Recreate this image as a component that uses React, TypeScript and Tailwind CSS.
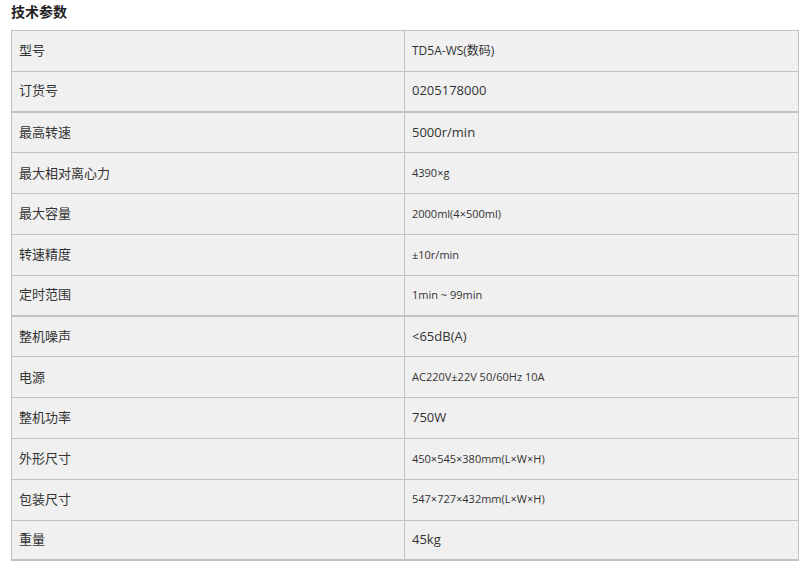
const rows: { label: string; value: string; size: 'sm' | 'md' | 'lg'; thick?: boolean }[] = [
  { label: '型号', value: 'TD5A-WS(数码)', size: 'md' },
  { label: '订货号', value: '0205178000', size: 'lg', thick: true },
  { label: '最高转速', value: '5000r/min', size: 'lg' },
  { label: '最大相对离心力', value: '4390×g', size: 'sm' },
  { label: '最大容量', value: '2000ml(4×500ml)', size: 'sm' },
  { label: '转速精度', value: '±10r/min', size: 'sm' },
  { label: '定时范围', value: '1min ~ 99min', size: 'sm', thick: true },
  { label: '整机噪声', value: '<65dB(A)', size: 'lg' },
  { label: '电源', value: 'AC220V±22V 50/60Hz 10A', size: 'sm' },
  { label: '整机功率', value: '750W', size: 'lg' },
  { label: '外形尺寸', value: '450×545×380mm(L×W×H)', size: 'sm' },
  { label: '包装尺寸', value: '547×727×432mm(L×W×H)', size: 'sm' },
  { label: '重量', value: '45kg', size: 'lg', thick: true },
];

const sizeClass = {
  sm: 'text-[11px]',
  md: 'text-[12px]',
  lg: 'text-[13px]',
};

export default function App() {
  return (
    <div
      className="w-[808px] h-[574px] bg-white text-[#333] px-[11px] pt-[2px]"
      style={{ fontFamily: '"Open Sans", "Noto Sans CJK SC", sans-serif' }}
    >
      {/* Title */}
      <h2 className="text-[14px] font-bold leading-[20px] h-[28px] text-[#222]">技术参数</h2>

      {/* Spec table */}
      <div className="w-[788px] border border-b-0 border-[#c2c2c2] bg-[#f0f0f0]">
        {rows.map((r, i) => (
          <div
            key={i}
            className={`flex h-[40.8px] border-b ${r.thick ? 'border-b-2' : ''} border-[#c2c2c2]`}
          >
            <div className="w-[393px] border-r border-[#c2c2c2] flex items-center pl-[7px] text-[13px]">
              {r.label}
            </div>
            <div className={`flex-1 flex items-center pl-[7px] ${sizeClass[r.size]}`}>{r.value}</div>
          </div>
        ))}
      </div>
    </div>
  );
}
